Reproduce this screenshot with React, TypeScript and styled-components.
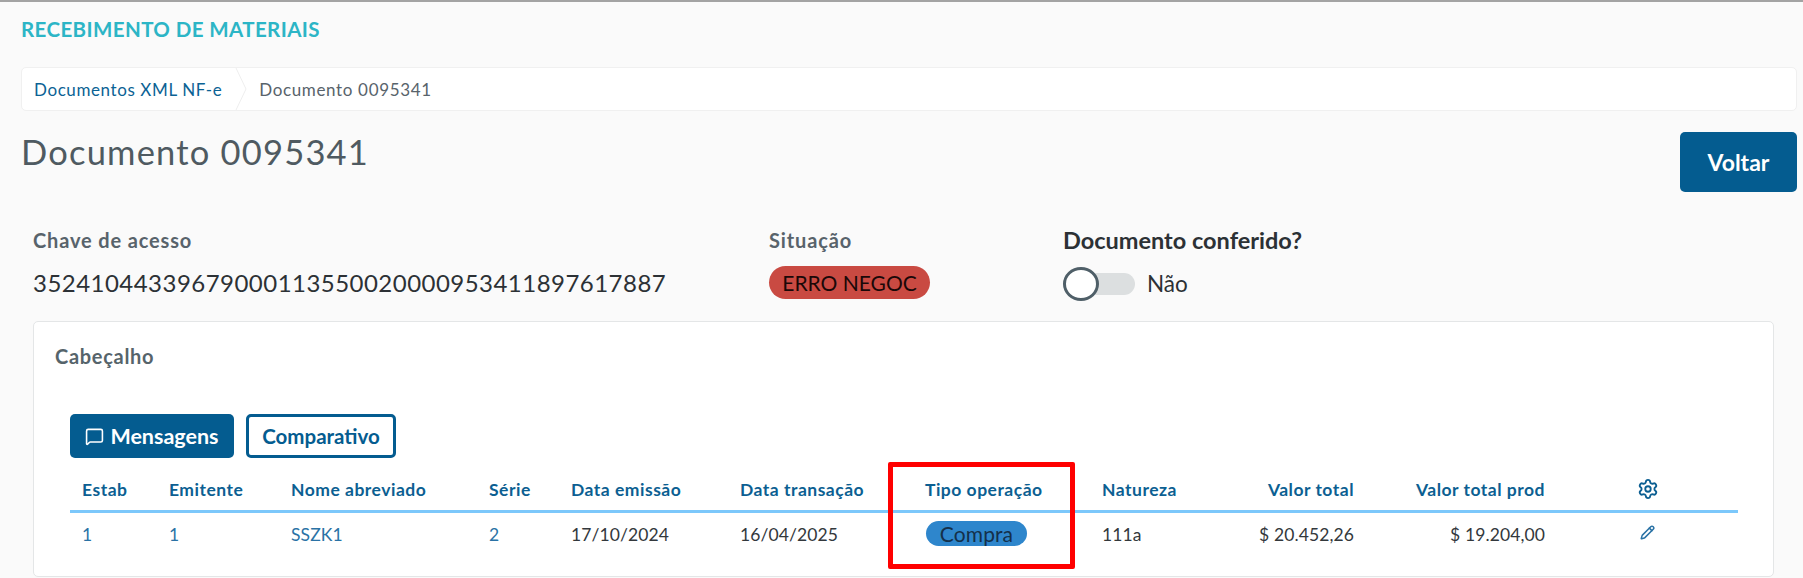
import styled, { createGlobalStyle } from 'styled-components';
import { MessageSquare, Pencil, Settings } from 'lucide-react';

const columns = [
    { label: 'Estab', width: 87 },
    { label: 'Emitente', width: 122 },
    { label: 'Nome abreviado', width: 198 },
    { label: 'Série', width: 82 },
    { label: 'Data emissão', width: 169 },
    { label: 'Data transação', width: 185 },
    { label: 'Tipo operação', width: 177 },
    { label: 'Natureza', width: 130 },
    { label: 'Valor total', width: 147, right: true },
    { label: 'Valor total prod', width: 191, right: true },
];

const App = () => {
    return (
        <Page>
            <GlobalStyle />
            <AppTitle>RECEBIMENTO DE MATERIAIS</AppTitle>

            <Breadcrumb>
                <CrumbLink>Documentos XML NF-e</CrumbLink>
                <CrumbArrow width="12" height="42" viewBox="0 0 12 42">
                    <path d="M1 0 L11 21 L1 42" fill="none" stroke="#eeeeee" strokeWidth="1" />
                </CrumbArrow>
                <CrumbCurrent>Documento 0095341</CrumbCurrent>
            </Breadcrumb>

            <HeadingRow>
                <Heading>Documento 0095341</Heading>
                <BackButton>Voltar</BackButton>
            </HeadingRow>

            <InfoRow>
                <KeyColumn>
                    <InfoLabel>Chave de acesso</InfoLabel>
                    <KeyValue>35241044339679000113550020000953411897617887</KeyValue>
                </KeyColumn>
                <StatusColumn>
                    <InfoLabel>Situação</InfoLabel>
                    <ErrorTag>ERRO NEGOC</ErrorTag>
                </StatusColumn>
                <div>
                    <SwitchLabel>Documento conferido?</SwitchLabel>
                    <SwitchRow>
                        <SwitchTrack>
                            <SwitchThumb />
                        </SwitchTrack>
                        <SwitchText>Não</SwitchText>
                    </SwitchRow>
                </div>
            </InfoRow>

            <Card>
                <CardTitle>Cabeçalho</CardTitle>
                <Actions>
                    <PrimaryAction>
                        <MessageSquare size={19} strokeWidth={2} />
                        Mensagens
                    </PrimaryAction>
                    <OutlineAction>Comparativo</OutlineAction>
                </Actions>
                <Table>
                    <colgroup>
                        {columns.map((col) => (
                            <col key={col.label} width={col.width} />
                        ))}
                        <col width={180} />
                    </colgroup>
                    <thead>
                        <tr>
                            {columns.map((col) => (
                                <HeadCell key={col.label} $right={col.right}>
                                    {col.label}
                                </HeadCell>
                            ))}
                            <HeadCell $center>
                                <Settings size={22} strokeWidth={2} />
                            </HeadCell>
                        </tr>
                    </thead>
                    <tbody>
                        <tr>
                            <LinkCell>1</LinkCell>
                            <LinkCell>1</LinkCell>
                            <LinkCell>SSZK1</LinkCell>
                            <LinkCell>2</LinkCell>
                            <Cell>17/10/2024</Cell>
                            <Cell>16/04/2025</Cell>
                            <Cell>
                                <TypeTag>Compra</TypeTag>
                            </Cell>
                            <Cell>111a</Cell>
                            <Cell $right>$ 20.452,26</Cell>
                            <Cell $right>$ 19.204,00</Cell>
                            <LinkCell $center>
                                <Pencil size={15} strokeWidth={2.4} />
                            </LinkCell>
                        </tr>
                    </tbody>
                </Table>
            </Card>

            <Highlight />
        </Page>
    );
};

const GlobalStyle = createGlobalStyle`
    html, body {
        margin: 0;
        padding: 0;
        background: #fafafa;
    }
    body {
        font-family: 'Lato', 'Noto Sans', sans-serif;
    }
`;
const Page = styled.div`
    position: relative;
    width: 1803px;
    height: 578px;
    box-sizing: border-box;
    overflow: hidden;
    border-top: 2px solid #a3a3a3;
    padding: 0 6px 0 21px;
`;
const AppTitle = styled.div`
    height: 65px;
    line-height: 54px;
    font-size: 20.5px;
    font-weight: 700;
    color: #2cb5c6;
    letter-spacing: 0.4px;
`;
const Breadcrumb = styled.div`
    display: flex;
    align-items: center;
    height: 42px;
    background: #fff;
    border: 1px solid #f0f0f0;
    border-radius: 5px;
    padding-left: 12px;
`;
const CrumbLink = styled.span`
    font-size: 17px;
    color: #0b6294;
    letter-spacing: 0.6px;
`;
const CrumbArrow = styled.svg`
    margin: 0 12px 0 13px;
`;
const CrumbCurrent = styled.span`
    font-size: 17px;
    color: #58636b;
    letter-spacing: 0.65px;
`;
const HeadingRow = styled.div`
    display: flex;
    justify-content: space-between;
    align-items: flex-start;
    margin-top: 21px;
    height: 60px;
`;
const Heading = styled.h1`
    margin: 0;
    font-size: 34.5px;
    font-weight: 400;
    line-height: 40px;
    color: #4f5a61;
    letter-spacing: 1.2px;
`;
const BackButton = styled.button`
    width: 117px;
    height: 60px;
    border: 0;
    border-radius: 5px;
    background: #045c90;
    color: #fff;
    font-family: inherit;
    font-size: 23px;
    font-weight: 700;
`;
const InfoRow = styled.div`
    display: flex;
    margin-top: 35px;
    padding-left: 12px;
`;
const KeyColumn = styled.div`
    width: 736px;
`;
const StatusColumn = styled.div`
    width: 294px;
`;
const InfoLabel = styled.div`
    height: 26px;
    line-height: 26px;
    font-size: 20px;
    font-weight: 700;
    color: #58636b;
    letter-spacing: 0.85px;
`;
const KeyValue = styled.div`
    margin-top: 17px;
    line-height: 26px;
    font-size: 24px;
    color: #2c3135;
    letter-spacing: 0.47px;
`;
const ErrorTag = styled.div`
    display: flex;
    align-items: center;
    justify-content: center;
    width: 161px;
    height: 33px;
    margin-top: 13px;
    border-radius: 17px;
    background: #c94a42;
    color: #1a0808;
    font-size: 21px;
`;
const SwitchLabel = styled.div`
    height: 26px;
    line-height: 26px;
    font-size: 23.5px;
    font-weight: 700;
    color: #2c3135;
`;
const SwitchRow = styled.div`
    display: flex;
    align-items: center;
    margin-top: 17px;
`;
const SwitchTrack = styled.div`
    display: flex;
    align-items: center;
    width: 72px;
    height: 22px;
    border-radius: 11px;
    background: #dcdfe0;
`;
const SwitchThumb = styled.div`
    box-sizing: border-box;
    width: 36px;
    height: 34px;
    border-radius: 50%;
    border: 3px solid #4f5f68;
    background: #fff;
`;
const SwitchText = styled.span`
    margin-left: 12px;
    font-size: 22.5px;
    color: #2c3135;
`;
const Card = styled.div`
    width: 1741px;
    height: 256px;
    box-sizing: border-box;
    margin: 22px 0 0 12px;
    background: #fff;
    border: 1px solid #e4e6e7;
    border-radius: 5px;
    padding: 0 36px 0 36px;
`;
const CardTitle = styled.div`
    margin: 22px 0 0 -15px;
    height: 24px;
    line-height: 24px;
    font-size: 20px;
    font-weight: 700;
    color: #56646b;
    letter-spacing: 0.7px;
`;
const Actions = styled.div`
    display: flex;
    gap: 12px;
    margin-top: 46px;
`;
const PrimaryAction = styled.button`
    display: flex;
    align-items: center;
    justify-content: center;
    gap: 6px;
    box-sizing: border-box;
    width: 164px;
    height: 44px;
    border: 0;
    border-radius: 5px;
    background: #045c90;
    color: #fff;
    font-family: inherit;
    font-size: 21.5px;
    font-weight: 700;
`;
const OutlineAction = styled.button`
    box-sizing: border-box;
    width: 150px;
    height: 44px;
    padding: 0;
    border: 3px solid #045c90;
    border-radius: 5px;
    background: #fff;
    color: #045c90;
    font-family: inherit;
    font-size: 20.5px;
    font-weight: 700;
`;
const Table = styled.table`
    width: 1668px;
    margin-top: 10px;
    border-collapse: collapse;
    table-layout: fixed;
`;
const HeadCell = styled.th<{ $right?: boolean; $center?: boolean }>`
    height: 42px;
    padding: 0 13px 0 12px;
    border-bottom: 3px solid #7cc8fb;
    text-align: ${({ $right, $center }) => ($right ? 'right' : $center ? 'center' : 'left')};
    font-size: 17.5px;
    font-weight: 700;
    color: #0c5f92;
    letter-spacing: 0.5px;
    white-space: nowrap;
    svg {
        display: block;
        margin: 0 auto;
    }
`;
const Cell = styled.td<{ $right?: boolean }>`
    height: 43px;
    padding: 0 13px 0 12px;
    text-align: ${({ $right }) => ($right ? 'right' : 'left')};
    font-size: 17.5px;
    color: #33383c;
    letter-spacing: 0.1px;
`;
const LinkCell = styled.td<{ $center?: boolean }>`
    height: 43px;
    padding: 0 13px 0 12px;
    text-align: ${({ $center }) => ($center ? 'center' : 'left')};
    font-size: 17.5px;
    color: #2a72a5;
    letter-spacing: 0.1px;
    svg {
        display: block;
        margin: 0 auto 4px;
    }
`;
const TypeTag = styled.span`
    display: flex;
    align-items: center;
    justify-content: center;
    width: 101px;
    height: 25px;
    margin-left: 1px;
    margin-bottom: 2px;
    border-radius: 13px;
    background: #2e86cc;
    color: #14304a;
    font-size: 21px;
`;
const Highlight = styled.div`
    position: absolute;
    left: 888px;
    top: 460px;
    width: 187px;
    height: 107px;
    box-sizing: border-box;
    border: 5px solid #ff0000;
    border-radius: 2px;
`;

export default App;
